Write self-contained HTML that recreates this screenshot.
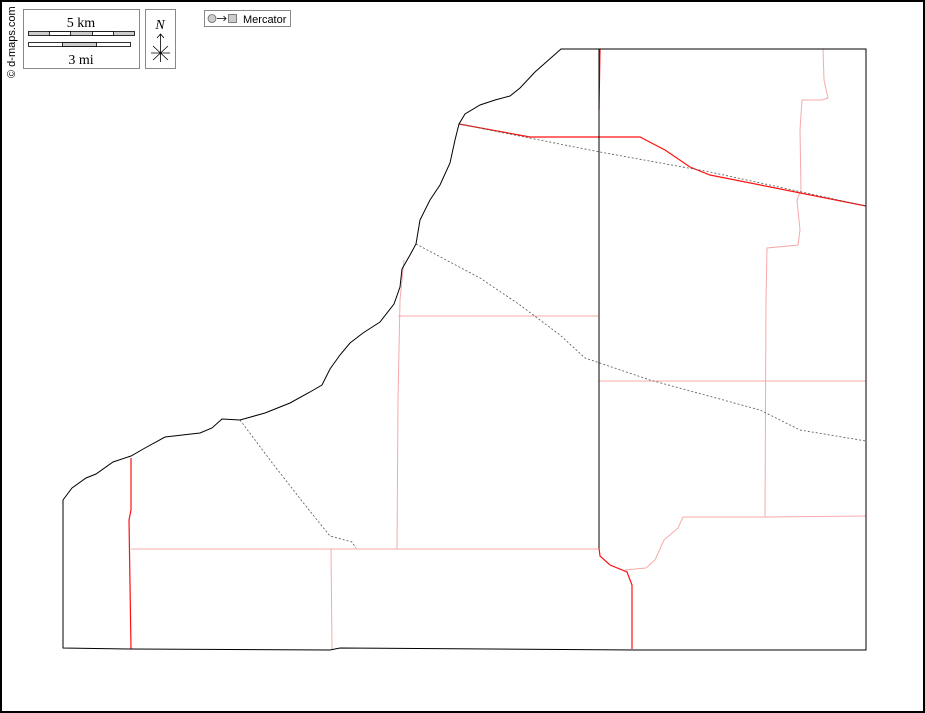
<!DOCTYPE html>
<html><head><meta charset="utf-8"><style>
html,body{margin:0;padding:0;background:#fff}
svg{display:block}
text{font-family:"Liberation Serif",serif}
</style></head><body>
<svg width="925" height="713" viewBox="0 0 925 713" xmlns="http://www.w3.org/2000/svg">
<rect x="1" y="1" width="923" height="711" fill="#fff" stroke="#000" stroke-width="2"/>
<!-- credit -->
<text transform="translate(15,78) rotate(-90)" font-family="Liberation Sans,sans-serif" font-size="11" fill="#000" style="font-family:'Liberation Sans',sans-serif">© d-maps.com</text>
<!-- scale box -->
<rect x="23.5" y="9.5" width="116" height="59" fill="#fff" stroke="#888"/>
<text x="81" y="27" font-size="14" text-anchor="middle">5 km</text>
<rect x="28.5" y="31.5" width="106" height="4" fill="#ccc" stroke="#000" stroke-width="0.8"/>
<rect x="49.5" y="31.5" width="21" height="4" fill="#fff" stroke="#000" stroke-width="0.8"/>
<rect x="92.5" y="31.5" width="21" height="4" fill="#fff" stroke="#000" stroke-width="0.8"/>
<rect x="28.5" y="42.5" width="102" height="4" fill="#fff" stroke="#000" stroke-width="0.8"/>
<rect x="62.5" y="42.5" width="34" height="4" fill="#ccc" stroke="#000" stroke-width="0.8"/>
<text x="81" y="64" font-size="14" text-anchor="middle">3 mi</text>
<!-- north -->
<rect x="145.5" y="9.5" width="30" height="59" fill="#fff" stroke="#888"/>
<text x="160" y="29" font-size="14" font-style="italic" text-anchor="middle">N</text>
<path d="M160.5 34V62M157 38L160.5 34L164 38M151 53H170M153 46L168 60M168 46L153 60" stroke="#000" stroke-width="0.8" fill="none"/>
<!-- mercator -->
<rect x="204.5" y="10.5" width="86" height="16" fill="#fff" stroke="#888"/>
<circle cx="212" cy="18.5" r="4" fill="#ccc" stroke="#666" stroke-width="0.8"/>
<path d="M217 18.5H226M223.5 16L226 18.5L223.5 21" stroke="#000" stroke-width="0.8" fill="none"/>
<rect x="228.5" y="14.5" width="8" height="8" fill="#ccc" stroke="#666" stroke-width="0.8"/>
<text x="243" y="23" font-size="11" style="font-family:'Liberation Sans',sans-serif">Mercator</text>

<!-- pink minor roads -->
<g fill="none" stroke="#f7a8a8" stroke-width="1">
<path d="M131 549L331 549L599 549"/>
<path d="M331 549L332 649"/>
<path d="M398 316L598 316"/>
<path d="M404 260L400 300L398 400L397 549"/>
<path d="M599 381L866 381"/>
<path d="M765 517L866 516"/>
<path d="M823 49L824 80L828 98L822 100L802 100L800 130L801 190L797 200L800 230L798 245L767 248L766 300L765 517"/>
<path d="M765 517L683 517L678 528L664 540L655 560L646 568L625 570"/>
</g>
<!-- red main roads -->
<g fill="none" stroke="#ff1010" stroke-width="1.2">
<path d="M459 124L530 137L640 137L665 150L690 167L710 175L866 206"/>
<path d="M600 49L599 110"/>
<path d="M599 548L600 556L610 565L627 572L632 585L632 649"/>
<path d="M131 458L131 510L129 520L131 649"/>
</g>
<!-- dashed -->
<g fill="none" stroke="#555" stroke-width="0.8" stroke-dasharray="2,2">
<path d="M459 124L600 152L710 172L866 206"/>
<path d="M416 244L480 278L520 305L560 335L585 358L650 380L760 410L800 430L866 441"/>
<path d="M240 420L270 460L305 505L330 536L352 542L356 548"/>
</g>
<!-- county outline -->
<g fill="none" stroke="#000" stroke-width="1">
<path d="M599 49V548"/>
<path d="M561 49H866V650L640 650L340 648L330 650L131 649L63 648V500L72 488L86 478L96 474L113 462L131 456L145 448L165 437L200 433L212 428L222 419L240 420L265 413L290 403L310 392L322 385L330 369L340 355L350 343L363 333L380 322L394 304L400 287L402 269L410 255L416 244L420 220L430 200L440 185L450 163L455 140L459 124L465 114L480 105L495 100L510 96L520 88L535 72Z"/>
</g>
</svg>
</body></html>
